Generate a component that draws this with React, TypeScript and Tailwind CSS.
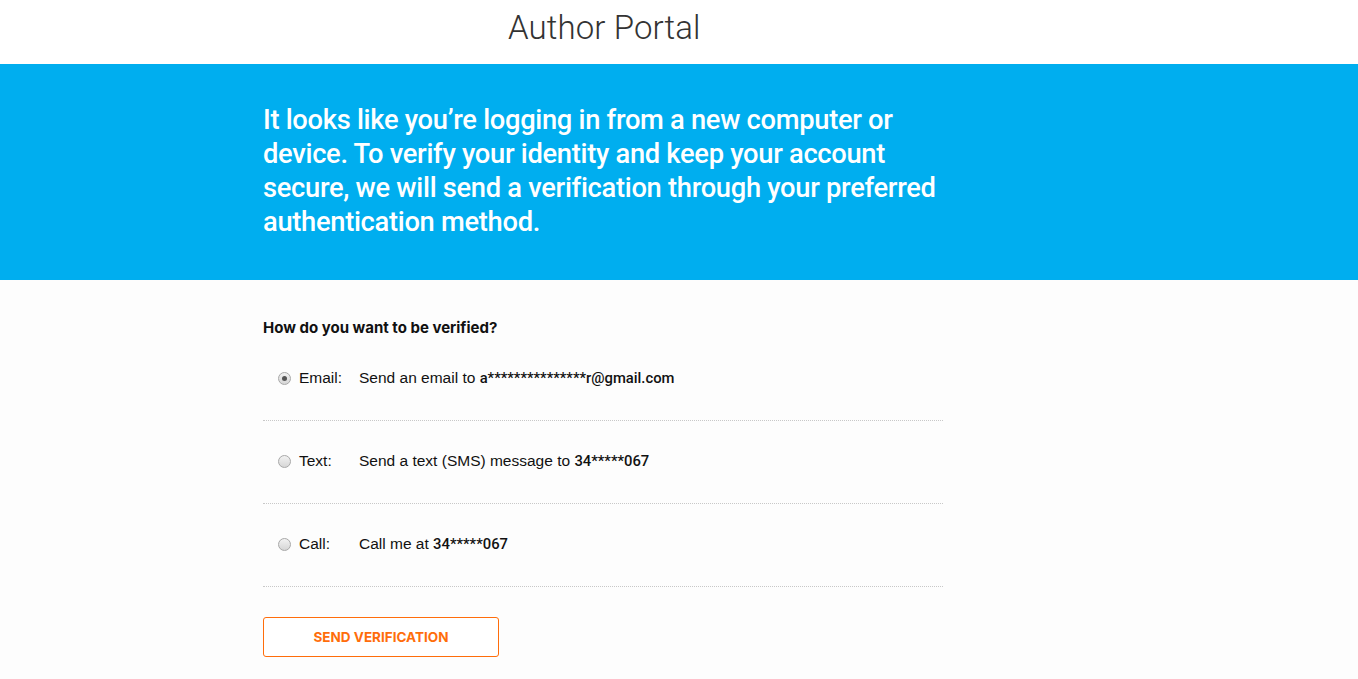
import React from 'react';

type Option = {
  id: string;
  label: string;
  text: string;
  target: string;
  checked?: boolean;
};

const options: Option[] = [
  { id: 'email', label: 'Email:', text: 'Send an email to ', target: 'a***************r@gmail.com', checked: true },
  { id: 'text', label: 'Text:', text: 'Send a text (SMS) message to ', target: '34*****067' },
  { id: 'call', label: 'Call:', text: 'Call me at ', target: '34*****067' },
];

const Radio = ({ checked }: { checked?: boolean }) => (
  <span className="flex h-[13px] w-[13px] items-center justify-center rounded-full border border-[#a8a8a8] bg-gradient-to-b from-[#f2f2f2] to-[#d6d6d6]">
    {checked && <span className="h-[5px] w-[5px] rounded-full bg-[#555]" />}
  </span>
);

const App = () => {
  return (
    <div className="min-h-[679px] bg-[#fdfdfd] font-['Roboto',sans-serif]">
      {/* Header */}
      <header className="h-16 bg-white pl-[508px] pt-[8px]">
        <h1 className="text-[33px] leading-10 font-light tracking-[0.1px] text-[#333]">Author Portal</h1>
      </header>

      {/* Banner */}
      <section className="h-[216px] bg-[#00aeef] pl-[263px] pt-[39px]">
        <p className="w-[690px] text-[27.3px] leading-[34px] font-medium tracking-[-0.3px] text-white">
          It looks like you’re logging in from a new computer or device. To verify your identity and keep your account
          secure, we will send a verification through your preferred authentication method.
        </p>
      </section>

      {/* Options */}
      <main className="pl-[263px] pt-[38px]">
        <h2 className="font-['Inter',sans-serif] text-[15px] leading-5 font-bold text-[#111]">
          How do you want to be verified?
        </h2>

        <div className="w-[680px]">
          {options.map((o) => (
            <div key={o.id} className="flex h-[83px] items-center border-b border-dotted border-[#c8c8c8] pb-[2px] pl-[15px]">
              <Radio checked={o.checked} />
              <span className="ml-[8px] w-[60px] font-['Liberation_Sans',Arial,sans-serif] text-[15.5px] text-[#111]">
                {o.label}
              </span>
              <span className="font-['Liberation_Sans',Arial,sans-serif] text-[15.5px] text-[#111]">
                {o.text}
                <span className="font-['Roboto',sans-serif] text-[14.8px] font-medium">{o.target}</span>
              </span>
            </div>
          ))}
        </div>

        <button className="mt-[30px] flex h-10 w-[236px] items-center justify-center rounded-[3px] border border-[#ff6d0b] bg-white font-['Inter',sans-serif] text-[13.5px] font-bold text-[#ff6d0b]">
          SEND VERIFICATION
        </button>
      </main>
    </div>
  );
};

export default App;
